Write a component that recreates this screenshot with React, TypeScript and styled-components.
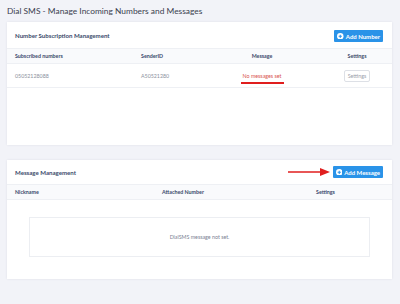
import React from "react";
import styled, { createGlobalStyle } from "styled-components";

const Global = createGlobalStyle`
  html, body { margin: 0; padding: 0; }
  body { background: #f2f3f8; font-family: Lato, "Open Sans", sans-serif; width: 400px; height: 304px; overflow: hidden; }
`;

const Page = styled.div`
  padding: 5px 8px 0 7px;
  display: flex;
  flex-direction: column;
`;

const Title = styled.h1`
  margin: 0 0 5px 0;
  font-size: 8.4px;
  font-weight: 400;
  color: #3a3e4f;
  line-height: 12px;
`;

const Card = styled.section<{ $h: number; $mb?: number }>`
  background: #fff;
  height: ${(p) => p.$h}px;
  margin-bottom: ${(p) => p.$mb ?? 0}px;
  box-shadow: 0 0 2px rgba(80, 90, 120, 0.12);
  display: flex;
  flex-direction: column;
`;

const CardHead = styled.div<{ $h: number }>`
  height: ${(p) => p.$h}px;
  display: flex;
  align-items: center;
  justify-content: space-between;
  padding: 0 9px 0 8px;
`;

const CardTitle = styled.div<{ $dy?: number }>`
  font-size: 6.1px;
  font-weight: 700;
  color: #3b4a6b;
  margin-top: ${(p) => p.$dy ?? 0}px;
`;

const Button = styled.button<{ $dy?: number }>`
  background: #2a93e8;
  color: #fff;
  border: none;
  border-radius: 1px;
  font-family: inherit;
  font-size: 6px;
  font-weight: 700;
  height: 12px;
  padding: 0 3px;
  margin-top: ${(p) => p.$dy ?? 0}px;
  display: flex;
  align-items: center;
  gap: 2px;
  cursor: pointer;
`;

const Row = styled.div<{ $cols: string; $head?: boolean; $h: number; $noTop?: boolean }>`
  display: grid;
  grid-template-columns: ${(p) => p.$cols};
  align-items: center;
  height: ${(p) => p.$h}px;
  padding: 0 8px;
  background: ${(p) => (p.$head ? "#f9fafc" : "#fff")};
  border-top: ${(p) => (p.$noTop ? "none" : "1px solid #eef0f4")};
  border-bottom: 1px solid #eef0f4;
  font-size: 5.3px;
  color: ${(p) => (p.$head ? "#3b4a6b" : "#8a8f9c")};
  font-weight: ${(p) => (p.$head ? 700 : 400)};
`;

const Cell = styled.div<{ $center?: boolean; $end?: boolean }>`
  text-align: ${(p) => (p.$center || p.$end ? "center" : "left")};
  justify-self: ${(p) => (p.$end ? "end" : "stretch")};
  width: ${(p) => (p.$end ? "54px" : "auto")};
`;

const RedText = styled.span`
  color: #d9534f;
  position: relative;
  display: inline-block;
  &::after {
    content: "";
    position: absolute;
    left: -2px;
    right: -3px;
    bottom: -5px;
    height: 1.5px;
    background: #e01e1e;
  }
`;

const SmallBtn = styled.span`
  display: inline-block;
  border: 1px solid #dde0e6;
  border-radius: 2px;
  padding: 2px 3px;
  color: #9aa0ab;
  font-size: 5.3px;
`;

const HeadRight = styled.div`
  display: flex;
  align-items: center;
  gap: 3px;
`;

const EmptyWrap = styled.div`
  padding: 17px 22px 0 22px;
`;

const EmptyBox = styled.div`
  height: 38px;
  border: 1px solid #eceef2;
  display: flex;
  align-items: center;
  justify-content: center;
  font-size: 5.3px;
  color: #7b8193;
`;

const PlusIcon = () => (
  <svg width="6.5" height="6.5" viewBox="0 0 10 10">
    <circle cx="5" cy="5" r="5" fill="#fff" />
    <path d="M5 2.5v5M2.5 5h5" stroke="#2a93e8" strokeWidth="1.6" />
  </svg>
);

const Arrow = () => (
  <svg width="42" height="10" viewBox="0 0 42 10">
    <path d="M0 5h33" stroke="#e01e1e" strokeWidth="1.4" />
    <path d="M32 1l10 4-10 4z" fill="#e01e1e" />
  </svg>
);

const cols1 = "126px 85px 72px 1fr";
const cols2 = "147px 154px 1fr";

export default function App() {
  return (
    <>
      <Global />
      <Page>
        <Title>Dial SMS - Manage Incoming Numbers and Messages</Title>
        <Card $h={123} $mb={15}>
          <CardHead $h={26}>
            <CardTitle>Number Subscription Management</CardTitle>
            <Button $dy={2}>
              <PlusIcon />
              Add Number
            </Button>
          </CardHead>
          <Row $head $h={14} $cols={cols1}>
            <Cell>Subscribed numbers</Cell>
            <Cell>SenderID</Cell>
            <Cell $center>Message</Cell>
            <Cell $end>Settings</Cell>
          </Row>
          <Row $h={23} $cols={cols1} $noTop>
            <Cell>05052128088</Cell>
            <Cell>A50521280</Cell>
            <Cell $center>
              <RedText>No messages set</RedText>
            </Cell>
            <Cell $end>
              <SmallBtn>Settings</SmallBtn>
            </Cell>
          </Row>
        </Card>
        <Card $h={119}>
          <CardHead $h={24}>
            <CardTitle>Message Management</CardTitle>
            <HeadRight>
              <Arrow />
              <Button>
                <PlusIcon />
                Add Message
              </Button>
            </HeadRight>
          </CardHead>
          <Row $head $h={14} $cols={cols2}>
            <Cell>Nickname</Cell>
            <Cell>Attached Number</Cell>
            <Cell>Settings</Cell>
          </Row>
          <EmptyWrap>
            <EmptyBox>DialSMS message not set.</EmptyBox>
          </EmptyWrap>
        </Card>
      </Page>
    </>
  );
}
